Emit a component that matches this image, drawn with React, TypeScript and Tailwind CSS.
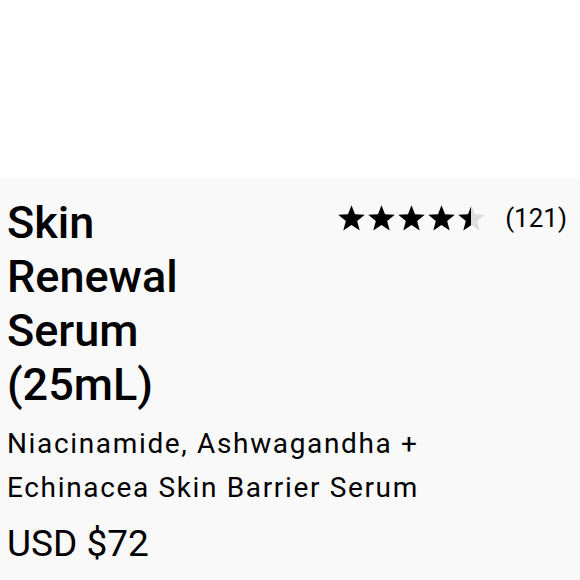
import React from "react";

const Star = ({ fill = "full" }: { fill?: "full" | "half" }) => (
  <svg viewBox="0 0 24 24" className="w-[29px] h-[29px]">
    <defs>
      <linearGradient id="half-star">
        <stop offset="50%" stopColor="#000" />
        <stop offset="50%" stopColor="#dcdcdc" />
      </linearGradient>
    </defs>
    <path
      d="M12 1.8l2.9 7.6 8.1.4-6.3 5.1 2.1 7.9L12 18.3l-6.8 4.5 2.1-7.9L1 9.8l8.1-.4z"
      fill={fill === "half" ? "url(#half-star)" : "#000"}
    />
  </svg>
);

export default function App() {
  return (
    <div className="w-[580px] h-[580px] bg-white flex flex-col font-['Roboto',sans-serif] text-black">
      <div className="h-[178px]" />
      <div className="flex-1 bg-[#f9f9f9] px-[7px] pt-[18px]">
        <div className="flex justify-between items-start">
          <h1 className="w-[200px] text-[45px] leading-[54px] font-medium">
            Skin Renewal Serum (25mL)
          </h1>
          <div className="flex items-center gap-[19px] pt-[7px] pr-[6px]">
            <div className="flex gap-[1px]">
              <Star />
              <Star />
              <Star />
              <Star />
              <Star fill="half" />
            </div>
            <span className="text-[26px] leading-none">(121)</span>
          </div>
        </div>
        <p className="mt-[10px] text-[28px] leading-[44px] tracking-[1.65px]">
          Niacinamide, Ashwagandha +<br />
          Echinacea Skin Barrier Serum
        </p>
        <p className="mt-[12px] text-[37px] leading-[44px]">USD $72</p>
      </div>
    </div>
  );
}
